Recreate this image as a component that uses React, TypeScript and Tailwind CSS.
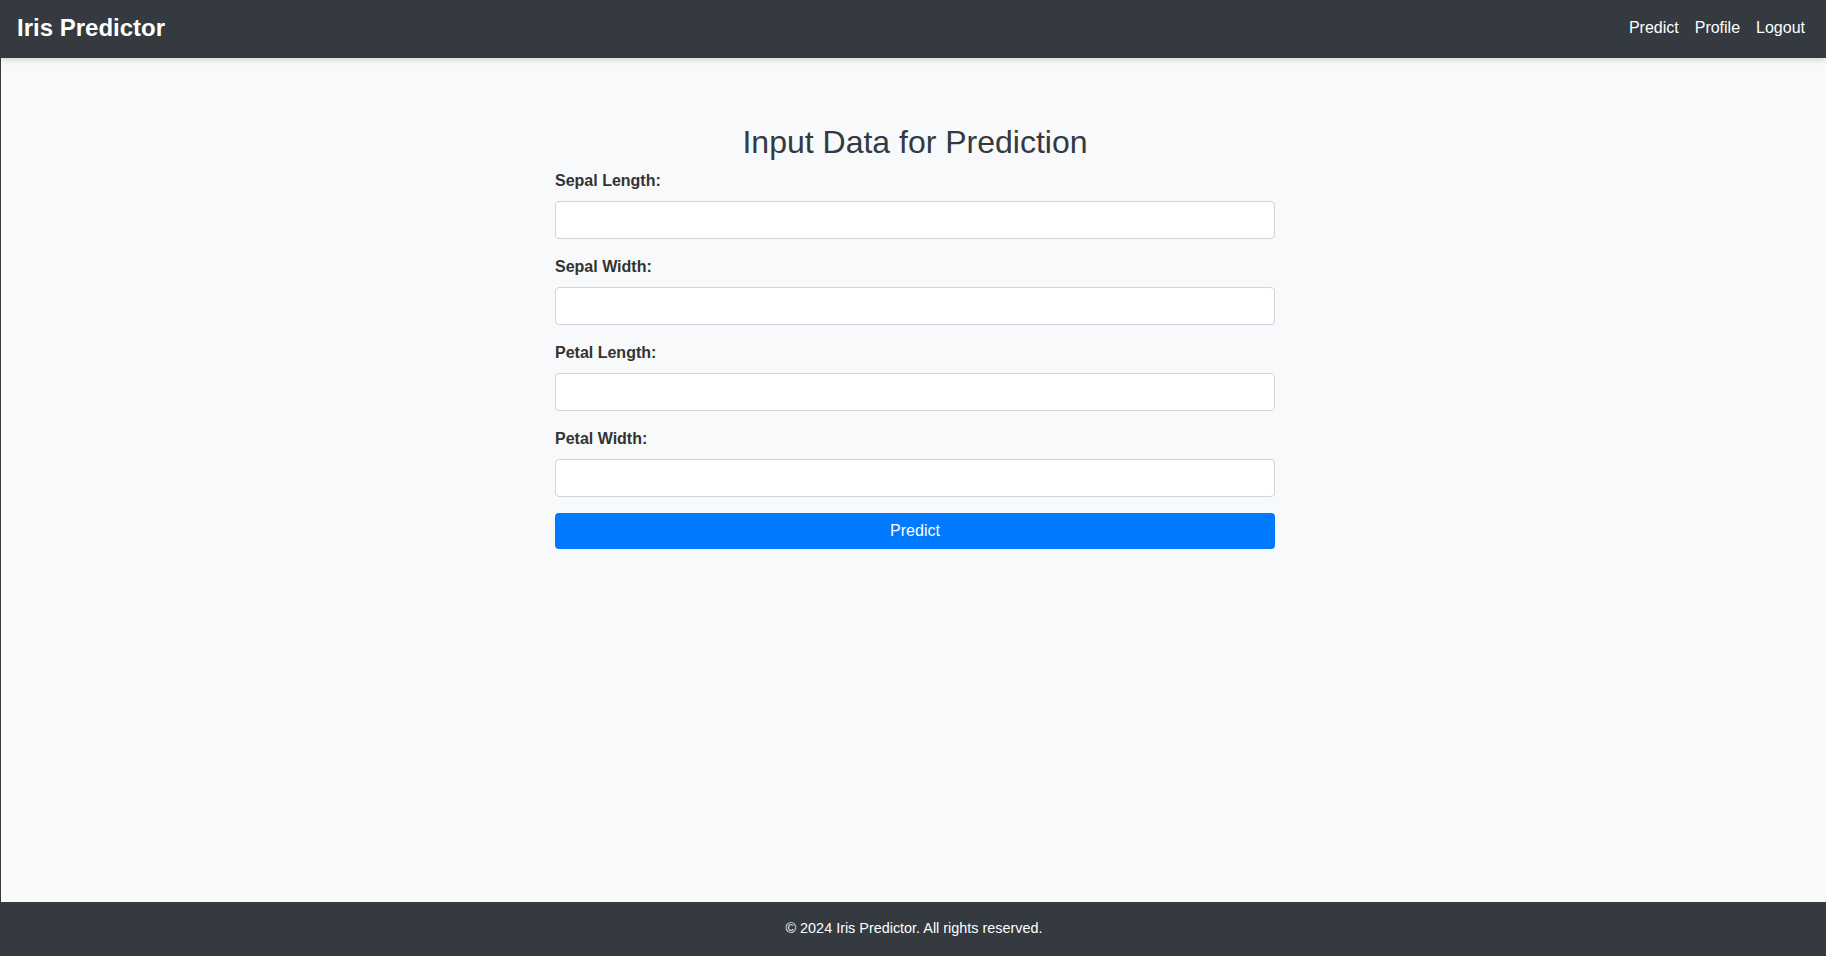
import React from "react";

const fields = ["Sepal Length:", "Sepal Width:", "Petal Length:", "Petal Width:"];

const App: React.FC = () => {
  return (
    <div className="min-h-screen flex flex-col bg-[#f8f9fa] font-['Liberation_Sans',Arial,sans-serif]">
      <header className="relative z-10 h-[58px] shrink-0 flex items-center justify-between bg-[#343a40] pl-[17px] pr-[21px] pb-[3px] text-white shadow-[0_2px_6px_rgba(0,0,0,0.15)]">
        <a href="#" className="text-[24px] font-bold leading-[1.5]">
          Iris Predictor
        </a>
        <nav className="flex gap-[16px] text-[16px] leading-6">
          <a href="#">Predict</a>
          <a href="#">Profile</a>
          <a href="#">Logout</a>
        </nav>
      </header>

      <main className="flex-1 border-l border-[#3a3a3a] pl-[3px] pt-[65px]">
        <form className="w-[720px] mx-auto" onSubmit={(e) => e.preventDefault()}>
          <h2 className="text-center text-[32px] leading-[1.2] mb-2 text-[#343a40]">
            Input Data for Prediction
          </h2>
          {fields.map((f) => (
            <div key={f} className="mb-4">
              <label className="block text-[16px] leading-6 font-bold text-[#333] mb-2">{f}</label>
              <input
                type="text"
                className="block w-full h-[38px] bg-white border border-[#ced4da] rounded-[4px] px-3 text-[16px] outline-none"
              />
            </div>
          ))}
          <button
            type="submit"
            className="block w-full h-[36px] bg-[#007bff] text-white text-[16px] leading-6 rounded-[4px]"
          >
            Predict
          </button>
        </form>
      </main>

      <footer className="h-[54px] shrink-0 flex items-center justify-center bg-[#343a40] pl-[2px] text-white text-[14.4px]">
        © 2024 Iris Predictor. All rights reserved.
      </footer>
    </div>
  );
};

export default App;
